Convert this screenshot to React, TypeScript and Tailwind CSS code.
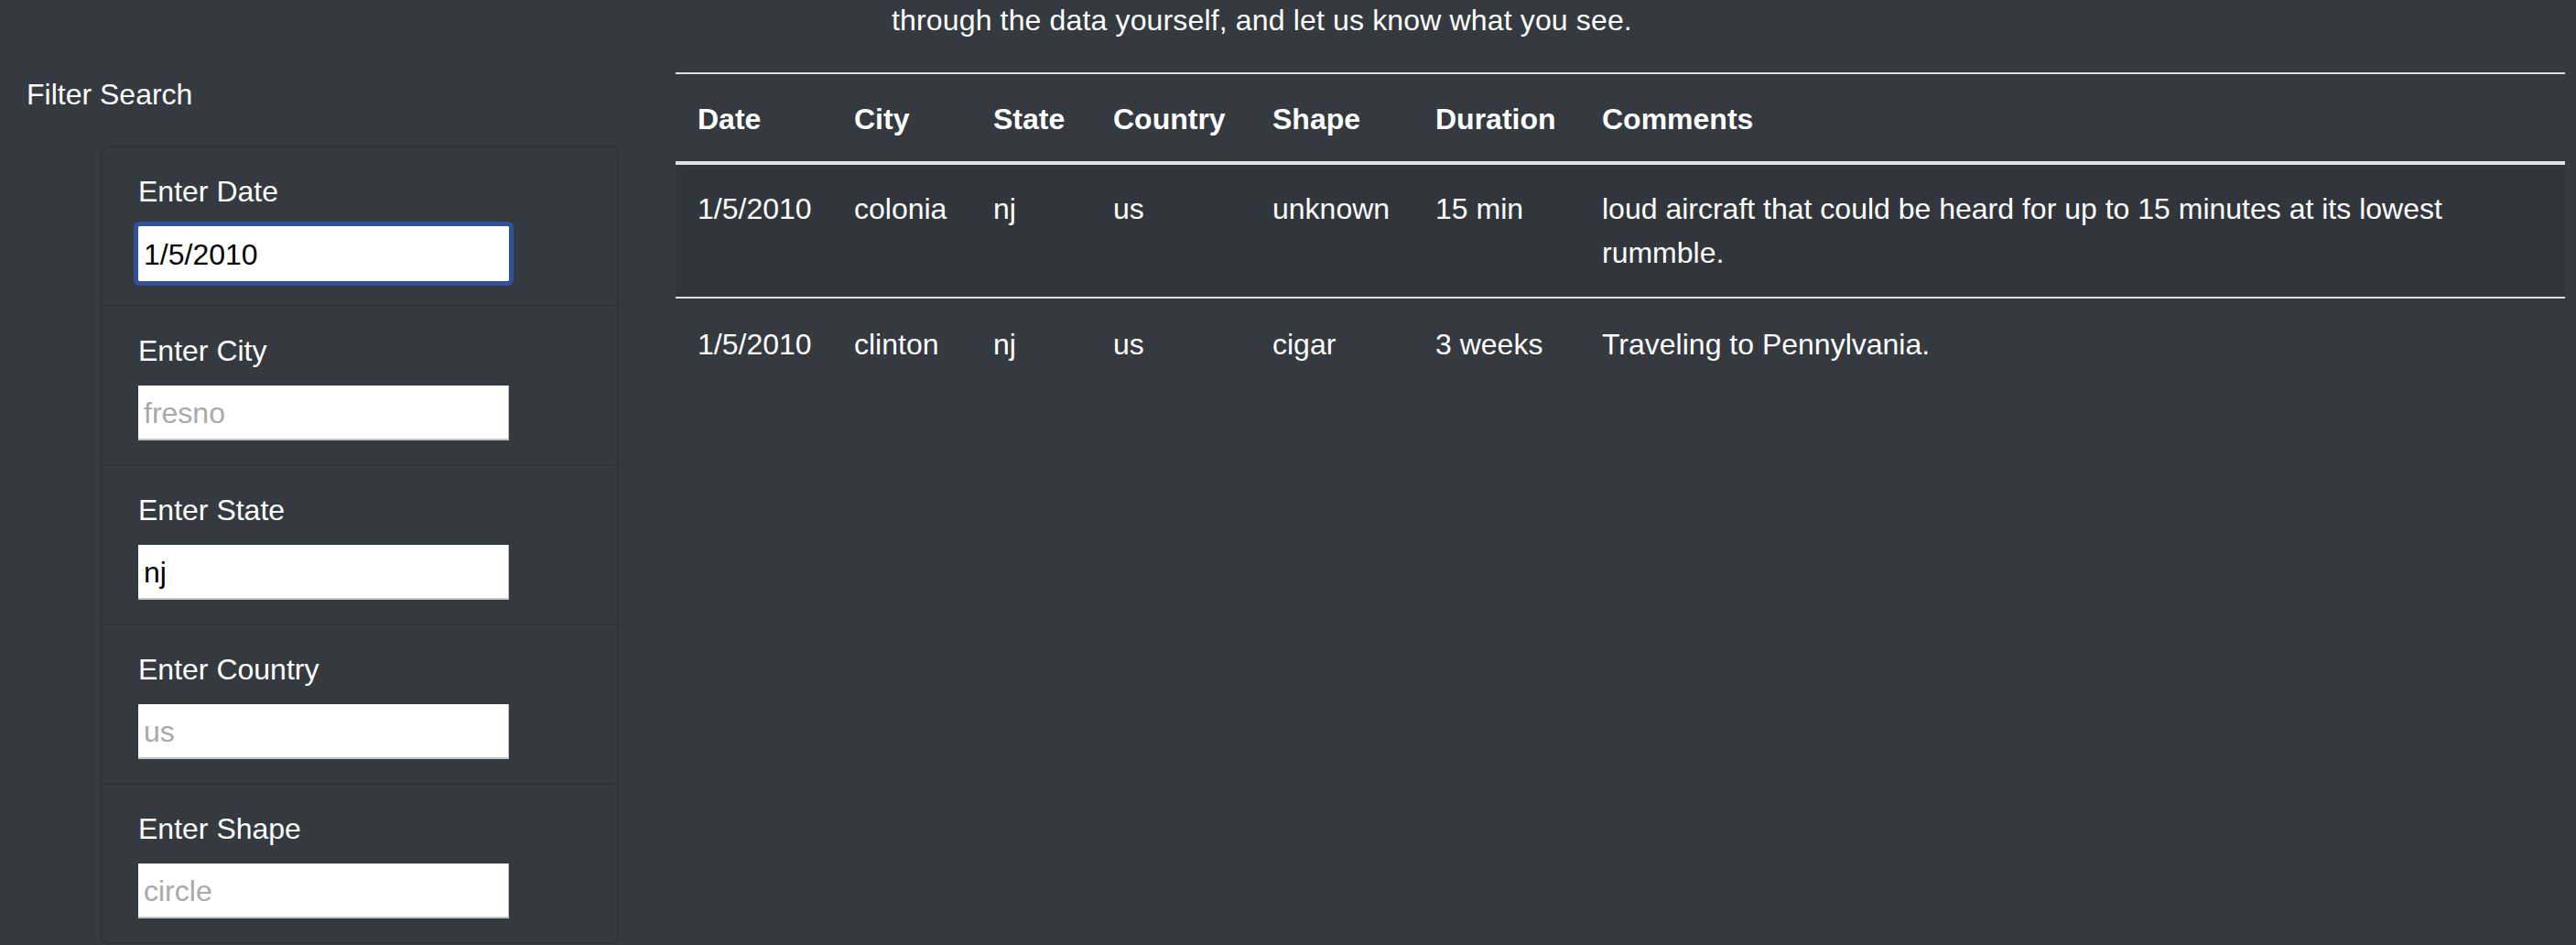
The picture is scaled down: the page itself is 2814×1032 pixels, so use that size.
import React from "react";

type Filter = {
	label: string;
	value?: string;
	placeholder?: string;
	focused?: boolean;
};

const filters: Filter[] = [
	{ label: "Enter Date", value: "1/5/2010", focused: true },
	{ label: "Enter City", placeholder: "fresno" },
	{ label: "Enter State", value: "nj" },
	{ label: "Enter Country", placeholder: "us" },
	{ label: "Enter Shape", placeholder: "circle" },
];

const columns = ["Date", "City", "State", "Country", "Shape", "Duration", "Comments"];
const widths = [171, 152, 131, 174, 178, 182, 1076];

const sightings = [
	[
		"1/5/2010",
		"colonia",
		"nj",
		"us",
		"unknown",
		"15 min",
		"loud aircraft that could be heard for up to 15 minutes at its lowest rummble.",
	],
	["1/5/2010", "clinton", "nj", "us", "cigar", "3 weeks", "Traveling to Pennylvania."],
];

const App: React.FC = () => {
	return (
		<div className="h-[1032px] overflow-hidden bg-[#343a40] text-white font-['Liberation_Sans',Arial,sans-serif] text-[32px] leading-[48px]">
			<p className="mt-[-2px] pl-[974px] whitespace-nowrap tracking-[0.15px]">
				through the data yourself, and let us know what you see.
			</p>

			<div className="mt-[33px] flex items-start">
				{/* Filters */}
				<aside className="w-[738px] shrink-0 pl-[29px]">
					<h5 className="font-normal">Filter Search</h5>
					<ul className="mt-[32px] ml-[81px] w-[566px] rounded-[8px] border-2 border-[#2e3338]">
						{filters.map((f, i) => (
							<li
								key={f.label}
								className={`pl-[39px] pt-[24px] pb-[26px] ${i > 0 ? "border-t-2 border-[#2e3338]" : ""}`}
							>
								<label className="block">{f.label}</label>
								<input
									type="text"
									defaultValue={f.value}
									placeholder={f.placeholder}
									className={
										f.focused
											? "mt-[14px] block h-[60px] w-[405px] bg-white pl-[6px] pt-[2px] text-[32px] text-black placeholder:text-[#a9a9a9] rounded-[1px] outline-[5px] outline-solid outline-[#31529a]"
											: "mt-[14px] block h-[60px] w-[405px] bg-white pl-[6px] pt-[2px] text-[32px] text-black placeholder:text-[#a9a9a9] border-r border-b-2 border-[#c4c4c4] outline-none"
									}
								/>
							</li>
						))}
					</ul>
				</aside>

				{/* Results */}
				<table className="w-[2064px] shrink-0 table-fixed border-collapse text-left">
					<colgroup>
						{widths.map((w, i) => (
							<col key={i} style={{ width: w }} />
						))}
					</colgroup>
					<thead>
						<tr>
							{columns.map((c) => (
								<th
									key={c}
									className="border-t-2 border-b-4 border-[#dee2e6] px-[24px] pt-[25px] pb-[22px] align-top font-bold"
								>
									{c}
								</th>
							))}
						</tr>
					</thead>
					<tbody>
						{sightings.map((row, r) => (
							<tr key={r} className={r % 2 === 0 ? "bg-[#31363c]" : ""}>
								{row.map((cell, c) => (
									<td
										key={c}
										className={
											r > 0
												? "border-t-2 border-[#dee2e6] px-[24px] pt-[26px] pb-[24px] align-top"
												: "px-[24px] py-[24px] align-top"
										}
									>
										{cell}
									</td>
								))}
							</tr>
						))}
					</tbody>
				</table>
			</div>
		</div>
	);
};

export default App;
